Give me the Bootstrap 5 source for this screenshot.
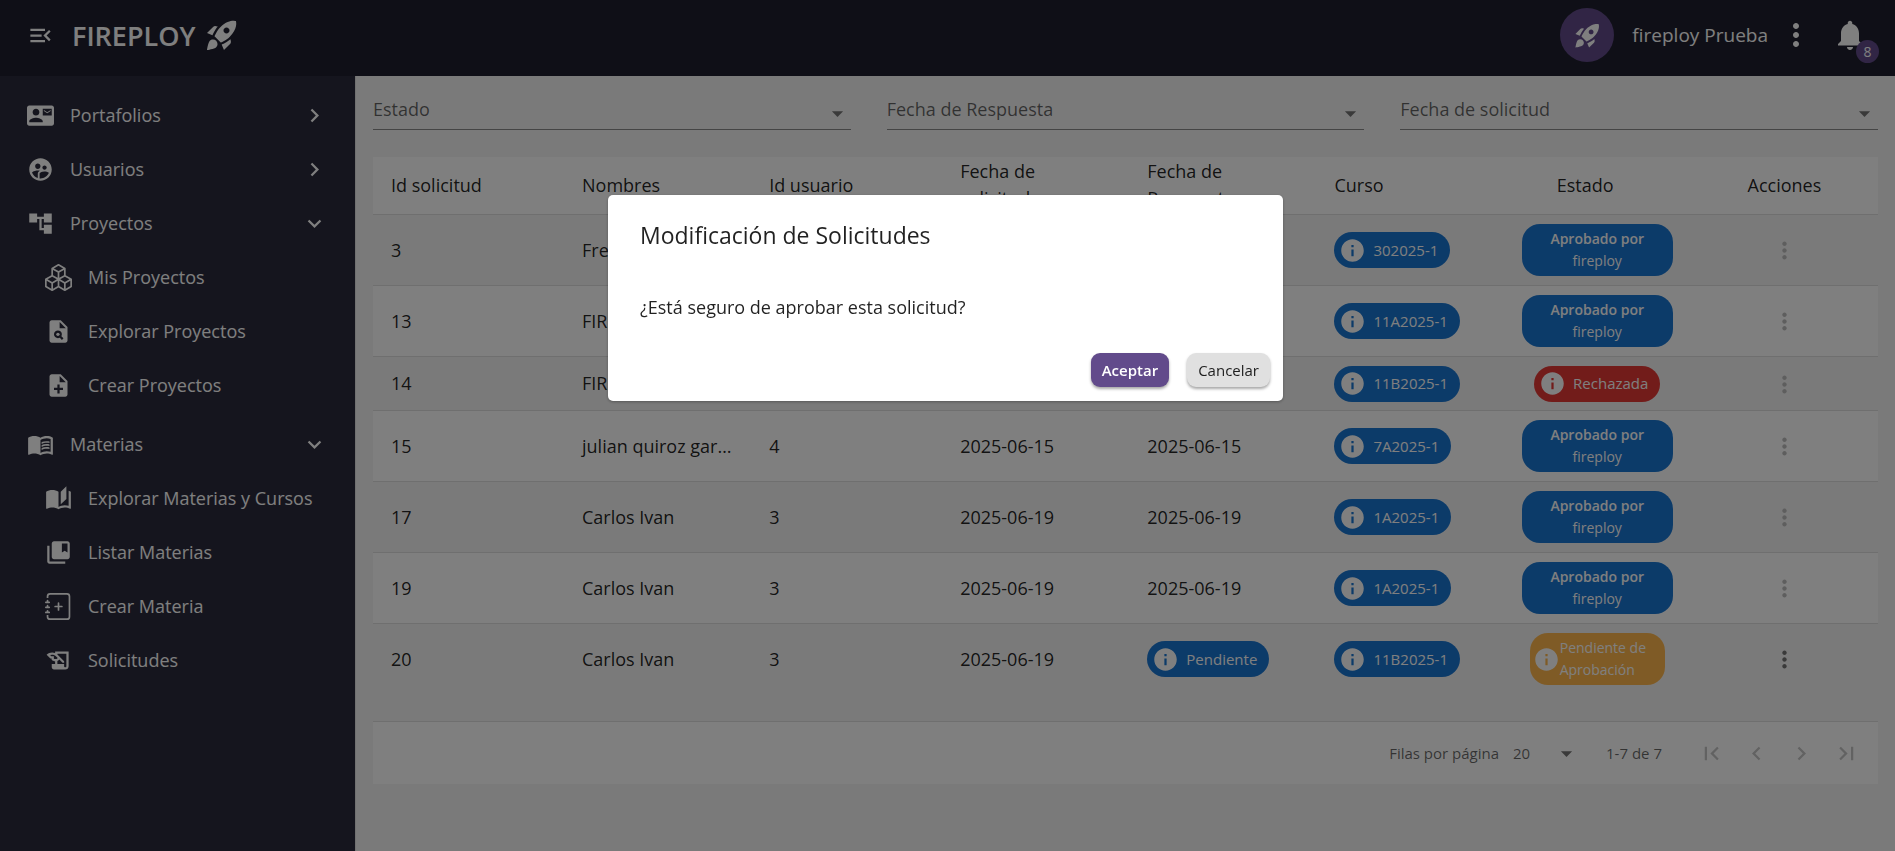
<!DOCTYPE html>
<html lang="es">
<head>
<meta charset="utf-8">
<meta name="viewport" content="width=device-width, initial-scale=1">
<title>Fireploy - Solicitudes</title>
<link rel="stylesheet" href="https://cdn.jsdelivr.net/npm/bootstrap@5.3.0/dist/css/bootstrap.min.css">
<style>
  body { font-family: "Open Sans", "Noto Sans", sans-serif; font-size: 18px; line-height: 27px; color: rgba(0,0,0,.87); background: #f5f5f5; }
  a, a:hover { color: inherit; text-decoration: none; }
  svg { fill: currentColor; flex: none; display: block; }
  .ic { width: 27px; height: 27px; }
  .ic-md { width: 29px; height: 29px; }
  .ic-lg { width: 36px; height: 36px; }
  .plain-btn { background: none; border: 0; padding: 0; color: inherit; }

  .topbar { height: 76px; background: #1f1f2e; color: #fff; padding: 0 27px 6px; }
  .brand { font-size: 27px; font-weight: 600; gap: 9px; }
  .topbar-start, .topbar-end { gap: 18px; }
  .user-name { font-size: 19px; margin-right: -8px; }
  .avatar { width: 54px; height: 54px; background: #624b8b; }
  .count { right: -11px; bottom: -10px; width: 23px; height: 23px; font-size: 14px; line-height: 23px; background: #624b8b; }

  .sidebar { width: 355px; flex: none; background: #2b2b3c; color: #fff; padding: 12px 27px; }
  .sidebar a { display: flex; align-items: center; height: 54px; gap: 16px; }
  .sidebar .sub-links { padding-left: 18px; }
  .sidebar .nav-group + .nav-group { margin-top: 5px; }

  .content { border-left: 1px solid #e0e0e0; padding: 0 17px; min-width: 0; }
  .filters { display: grid; grid-template-columns: repeat(3, 1fr); gap: 36px; padding: 16px 0 27px; }
  .line-select { appearance: none; border: 0; border-bottom: 1px solid #8b8b8b; border-radius: 0; width: 100%; height: 38px; padding: 0 27px 2px 0; color: rgba(0,0,0,.6); background: url("data:image/svg+xml,%3Csvg xmlns='http://www.w3.org/2000/svg' viewBox='0 0 24 24' fill='%23757575'%3E%3Cpath d='M7 10l5 5 5-5z'/%3E%3C/svg%3E") no-repeat right 8px / 27px 27px; }

  .requests { background: #fff; }
  .requests table { width: 100%; table-layout: fixed; border-collapse: separate; border-spacing: 0; }
  .requests .wide { width: 191px; }
  .requests th, .requests td { padding: 0 16px 0 18px; font-weight: 400; border-bottom: 1px solid #dedede; white-space: nowrap; overflow: hidden; text-overflow: ellipsis; }
  .requests th { height: 58px; white-space: normal; }
  .requests .two-line { display: block; height: 56px; }
  .requests td { height: 71px; }
  .requests tr.short td { height: 54px; }
  .requests tr.last-row td { height: 98px; padding-bottom: 27px; }
  .requests tbody tr:nth-child(odd) { background: #f5f5f5; }
  .requests th.sortable { padding-right: 40px; }
  .requests .text-center { padding-left: 16px; }
  .tag { display: inline-flex; align-items: center; vertical-align: middle; gap: 7px; height: 36px; border: 0; border-radius: 18px; padding: 0 12px 0 5px; background: #1976d2; color: #fff; font-size: 15px; }
  .tag-tall { height: 52px; font-size: 14px; line-height: 22px; white-space: normal; }
  .tag-by { width: 151px; padding: 0 24px; justify-content: center; text-align: center; }
  .tag-wait { width: 135px; padding: 0 5px 0 3px; gap: 0; text-align: left; background: #ffb74d; }
  .tag-no { background: #e53935; }
  .tag-by b { font-weight: 600; }
  .dots { color: #757575; vertical-align: middle; }
  .dots:disabled { color: #bdbdbd; }
  .pager { height: 62px; padding-right: 9px; font-size: 15px; color: rgba(0,0,0,.6); }
  .pager select { width: 67px; height: 27px; border: 0; padding: 0 27px 0 0; margin: 0 26px 0 14px; appearance: none; color: inherit; background: url("data:image/svg+xml,%3Csvg xmlns='http://www.w3.org/2000/svg' viewBox='0 0 24 24' fill='%23757575'%3E%3Cpath d='M7 10l5 5 5-5z'/%3E%3C/svg%3E") no-repeat right center / 27px 27px; }
  .pager .range { margin-right: 27px; }
  .pager button { width: 45px; height: 45px; display: grid; place-items: center; color: #c4c4c4; }

  .modal-backdrop.show { opacity: .5; }
  .modal { padding-right: 4px; }
  .modal-dialog { max-width: 675px; margin-top: 195px; }
  .modal-content { border: 0; border-radius: 5px; color: rgba(0,0,0,.87); box-shadow: 0 1px 3px rgba(0,0,0,.3); }
  .confirm-head { padding: 25px 32px 0; }
  .confirm-head h2 { font-size: 23px; line-height: 30px; font-weight: 400; margin: 0; }
  .confirm-text { padding: 44px 32px 0; margin: 0; }
  .confirm-foot { padding: 32px 13px 14px; gap: 18px; }
  .confirm-foot .btn { height: 34px; padding: 0 11px; border: 0; border-radius: 9px; font-size: 15px; line-height: 32px; box-shadow: 0 2px 3px rgba(0,0,0,.35); }
  .btn-accept, .btn-accept:hover { background: #624b8b; color: #fff; font-weight: 600; }
  .btn-cancel, .btn-cancel:hover { background: #e0e0e0; color: rgba(0,0,0,.87); }
</style>
</head>
<body class="modal-open">
<svg class="d-none" aria-hidden="true">
  <symbol id="rocket" viewBox="0 0 24 24"><path d="M9.19 6.35c-2.04 2.29-3.44 5.58-3.57 5.89L2 10.69l4.05-4.05c.47-.47 1.15-.68 1.81-.55l1.33.26zM11.17 17s3.74-1.55 5.89-3.7c5.4-5.4 4.5-9.62 4.21-10.57-.95-.3-5.17-1.19-10.57 4.21C8.55 9.09 7 12.83 7 12.83L11.17 17zm6.48-2.19c-2.29 2.04-5.58 3.44-5.89 3.57L13.31 22l4.05-4.05c.47-.47.68-1.15.55-1.81l-.26-1.33zM9 18c0 .83-.34 1.58-.88 2.12C6.94 21.3 2 22 2 22s.7-4.94 1.88-6.12C4.42 15.34 5.17 15 6 15c1.66 0 3 1.34 3 3zm4-9c0-1.1.9-2 2-2s2 .9 2 2-.9 2-2 2-2-.9-2-2z"/></symbol>
  <symbol id="more" viewBox="0 0 24 24"><path d="M12 8c1.1 0 2-.9 2-2s-.9-2-2-2-2 .9-2 2 .9 2 2 2zm0 2c-1.1 0-2 .9-2 2s.9 2 2 2 2-.9 2-2-.9-2-2-2zm0 6c-1.1 0-2 .9-2 2s.9 2 2 2 2-.9 2-2-.9-2-2-2z"/></symbol>
  <symbol id="info" viewBox="0 0 24 24"><path d="M12 2C6.48 2 2 6.48 2 12s4.48 10 10 10 10-4.48 10-10S17.52 2 12 2zm1 15h-2v-6h2v6zm0-8h-2V7h2v2z"/></symbol>
  <symbol id="right" viewBox="0 0 24 24"><path d="M10 6 8.59 7.41 13.17 12l-4.58 4.59L10 18l6-6z"/></symbol>
  <symbol id="left" viewBox="0 0 24 24"><path d="M15.41 7.41 14 6l-6 6 6 6 1.41-1.41L10.83 12z"/></symbol>
  <symbol id="down" viewBox="0 0 24 24"><path d="M16.59 8.59 12 13.17 7.41 8.59 6 10l6 6 6-6z"/></symbol>
</svg>

<div class="d-flex flex-column min-vh-100">
  <header class="topbar d-flex align-items-center justify-content-between">
    <div class="topbar-start d-flex align-items-center">
      <button class="plain-btn" aria-label="Contraer menú"><svg class="ic" viewBox="0 0 24 24"><path d="M3 18h13v-2H3v2zm0-5h10v-2H3v2zm0-7v2h13V6H3zm18 9.59L17.42 12 21 8.41 19.59 7l-5 5 5 5L21 15.59z"/></svg></button>
      <a href="#" class="brand d-flex align-items-center">FIREPLOY <svg class="ic-lg"><use href="#rocket"/></svg></a>
    </div>
    <div class="topbar-end d-flex align-items-center">
      <div class="avatar rounded-circle d-flex align-items-center justify-content-center"><svg class="ic-md"><use href="#rocket"/></svg></div>
      <span class="user-name">fireploy Prueba</span>
      <button class="plain-btn" aria-label="Cuenta"><svg class="ic-lg"><use href="#more"/></svg></button>
      <button class="plain-btn position-relative" aria-label="Notificaciones"><svg class="ic-lg" viewBox="0 0 24 24"><path d="M12 22c1.1 0 2-.9 2-2h-4c0 1.1.89 2 2 2zm6-6v-5c0-3.07-1.64-5.64-4.5-6.32V4c0-.83-.67-1.5-1.5-1.5s-1.5.67-1.5 1.5v.68C7.63 5.36 6 7.92 6 11v5l-2 2v1h16v-1l-2-2z"/></svg><span class="count position-absolute rounded-circle">8</span></button>
    </div>
  </header>

  <div class="d-flex flex-grow-1">
    <nav class="sidebar" aria-label="Principal">
      <a href="#"><svg class="ic" viewBox="0 0 24 24"><path d="M21 8V7l-3 2-3-2v1l3 2 3-2zm1-5H2C.9 3 0 3.9 0 5v14c0 1.1.9 2 2 2h20c1.1 0 1.99-.9 1.99-2L24 5c0-1.1-.9-2-2-2zM8 6c1.66 0 3 1.34 3 3s-1.34 3-3 3-3-1.34-3-3 1.34-3 3-3zm6 12H2v-1c0-2 4-3.1 6-3.1s6 1.1 6 3.1v1zm8-6h-8V6h8v6z"/></svg><span class="flex-grow-1">Portafolios</span><svg class="ic"><use href="#right"/></svg></a>
      <a href="#"><svg class="ic" viewBox="0 0 24 24"><path d="M11.99 2c-5.52 0-10 4.48-10 10s4.48 10 10 10 10-4.48 10-10-4.48-10-10-10zm3.61 6.34c1.07 0 1.93.86 1.93 1.93 0 1.07-.86 1.93-1.93 1.93-1.07 0-1.93-.86-1.93-1.93-.01-1.07.86-1.93 1.93-1.93zm-6-1.58c1.3 0 2.36 1.06 2.36 2.36 0 1.3-1.06 2.36-2.36 2.36s-2.36-1.06-2.36-2.36c0-1.31 1.05-2.36 2.36-2.36zm0 9.13v3.75c-2.4-.75-4.3-2.6-5.14-4.96 1.05-1.12 3.67-1.69 5.14-1.69.53 0 1.2.08 1.9.22-1.64.87-1.9 2.02-1.9 2.68zM11.99 20c-.27 0-.53-.01-.79-.04v-4.07c0-1.42 2.94-2.13 4.4-2.13 1.07 0 2.92.39 3.84 1.15-1.17 2.97-4.06 5.09-7.45 5.09z"/></svg><span class="flex-grow-1">Usuarios</span><svg class="ic"><use href="#right"/></svg></a>
      <div class="nav-group">
        <a href="#"><svg class="ic" viewBox="0 0 24 24"><path d="M22 11V3h-7v3H9V3H2v8h7V8h2v10h4v3h7v-8h-7v3h-2V8h2v3z"/></svg><span class="flex-grow-1">Proyectos</span><svg class="ic"><use href="#down"/></svg></a>
        <div class="sub-links">
          <a href="#"><svg class="ic" viewBox="0 0 16 16"><path d="M7.752.066a.5.5 0 0 1 .496 0l3.75 2.143a.5.5 0 0 1 .252.434v3.995l3.498 2A.5.5 0 0 1 16 9.07v4.286a.5.5 0 0 1-.252.434l-3.75 2.143a.5.5 0 0 1-.496 0l-3.502-2-3.502 2.001a.5.5 0 0 1-.496 0l-3.75-2.143A.5.5 0 0 1 0 13.357V9.071a.5.5 0 0 1 .252-.434L3.75 6.638V2.643a.5.5 0 0 1 .252-.434L7.752.066ZM4.25 7.504 1.508 9.071l2.742 1.567 2.742-1.567L4.25 7.504ZM7.5 9.933l-2.75 1.571v3.134l2.75-1.571V9.933Zm1 3.134 2.75 1.571v-3.134L8.5 9.933v3.134Zm.508-3.996 2.742 1.567 2.742-1.567-2.742-1.567-2.742 1.567Zm2.242-2.433V3.504L8.5 5.076V8.21l2.75-1.572ZM7.5 8.21V5.076L4.75 3.504v3.134L7.5 8.21ZM5.258 2.643 8 4.21l2.742-1.567L8 1.076 5.258 2.643ZM15 9.933l-2.75 1.571v3.134L15 13.067V9.933ZM3.75 14.638v-3.134L1 9.933v3.134l2.75 1.571Z"/></svg>Mis Proyectos</a>
          <a href="#"><svg class="ic" viewBox="0 0 24 24"><path fill-rule="evenodd" d="M14 2H6c-1.1 0-2 .9-2 2v16c0 1.1.89 2 1.99 2H18c1.1 0 2-.9 2-2V8l-6-6zm1.04 17.45-1.88-1.88c-1.33.71-3.01.53-4.13-.59-1.37-1.37-1.37-3.58 0-4.95 1.37-1.37 3.58-1.37 4.95 0 1.12 1.12 1.3 2.8.59 4.13l1.88 1.88-1.41 1.41zM13 9V3.5L18.5 9H13z"/><circle cx="11.5" cy="14.5" r="1.5"/></svg>Explorar Proyectos</a>
          <a href="#"><svg class="ic" viewBox="0 0 24 24"><path d="M14 2H6c-1.1 0-1.99.9-1.99 2L4 20c0 1.1.89 2 1.99 2H18c1.1 0 2-.9 2-2V8l-6-6zm2 14h-3v3h-2v-3H8v-2h3v-3h2v3h3v2zm-3-7V3.5L18.5 9H13z"/></svg>Crear Proyectos</a>
        </div>
      </div>
      <div class="nav-group">
        <a href="#"><svg class="ic" viewBox="0 0 24 24"><path d="M17.5 4.5c-1.95 0-4.05.4-5.5 1.5-1.45-1.1-3.55-1.5-5.5-1.5S2.45 4.9 1 6v14.65c0 .65.73.45.75.45C3.1 20.45 5.05 20 6.5 20c1.95 0 4.05.4 5.5 1.5 1.35-.85 3.8-1.5 5.5-1.5 1.65 0 3.35.3 4.75 1.05.41.21.75-.19.75-.45V6c-1.49-1.12-3.63-1.5-5.5-1.5zm3.5 14c-1.1-.35-2.3-.5-3.5-.5-1.7 0-4.15.65-5.5 1.5V8c1.35-.85 3.8-1.5 5.5-1.5 1.2 0 2.4.15 3.5.5v11.5z"/><path d="M17.5 10.5c.88 0 1.73.09 2.5.26V9.24c-.79-.15-1.64-.24-2.5-.24-1.7 0-3.24.29-4.5.83v1.66c1.13-.64 2.7-.99 4.5-.99zM13 12.49v1.66c1.13-.64 2.7-.99 4.5-.99.88 0 1.73.09 2.5.26V11.9c-.79-.15-1.64-.24-2.5-.24-1.7 0-3.24.3-4.5.83zM17.5 14.33c-1.7 0-3.24.29-4.5.83v1.66c1.13-.64 2.7-.99 4.5-.99.88 0 1.73.09 2.5.26v-1.52c-.79-.16-1.64-.24-2.5-.24z"/></svg><span class="flex-grow-1">Materias</span><svg class="ic"><use href="#down"/></svg></a>
        <div class="sub-links">
          <a href="#"><svg class="ic" viewBox="0 0 24 24"><path d="M19 1l-5 5v11l5-4.5V1zM1 6v14.65c0 .25.25.5.5.5.1 0 .15-.05.25-.05C3.1 20.45 5.05 20 6.5 20c1.95 0 4.05.4 5.5 1.5V6c-1.45-1.1-3.55-1.5-5.5-1.5S2.45 4.9 1 6zm22 13.5V6c-.6-.45-1.25-.75-2-1v13.5c-1.1-.35-2.3-.5-3.5-.5-1.7 0-4.15.65-5.5 1.5v2c1.35-.85 3.8-1.5 5.5-1.5 1.65 0 3.35.3 4.75 1.05.1.05.15.05.25.05.25 0 .5-.25.5-.5v-1.1z"/></svg>Explorar Materias y Cursos</a>
          <a href="#"><svg class="ic" viewBox="0 0 24 24"><path d="M4 6H2v14c0 1.1.9 2 2 2h14v-2H4V6z"/><path d="M20 2H8c-1.1 0-2 .9-2 2v12c0 1.1.9 2 2 2h12c1.1 0 2-.9 2-2V4c0-1.1-.9-2-2-2zm0 10l-2.5-1.5L15 12V4h5v8z"/></svg>Listar Materias</a>
          <a href="#"><svg class="ic" viewBox="0 0 16 16"><path d="M8 5.5a.5.5 0 0 1 .5.5v1.5H10a.5.5 0 0 1 0 1H8.5V10a.5.5 0 0 1-1 0V8.5H6a.5.5 0 0 1 0-1h1.5V6a.5.5 0 0 1 .5-.5z"/><path d="M3 0h10a2 2 0 0 1 2 2v12a2 2 0 0 1-2 2H3a2 2 0 0 1-2-2v-1h1v1a1 1 0 0 0 1 1h10a1 1 0 0 0 1-1V2a1 1 0 0 0-1-1H3a1 1 0 0 0-1 1v1H1V2a2 2 0 0 1 2-2z"/><path d="M1 5v-.5a.5.5 0 0 1 1 0V5h.5a.5.5 0 0 1 0 1h-2a.5.5 0 0 1 0-1H1zm0 3v-.5a.5.5 0 0 1 1 0V8h.5a.5.5 0 0 1 0 1h-2a.5.5 0 0 1 0-1H1zm0 3v-.5a.5.5 0 0 1 1 0v.5h.5a.5.5 0 0 1 0 1h-2a.5.5 0 0 1 0-1H1z"/></svg>Crear Materia</a>
          <a href="#"><svg class="ic" viewBox="0 0 24 24"><path d="M9 4v1.38c-.83-.33-1.72-.5-2.61-.5-1.79 0-3.58.68-4.95 2.05l3.33 3.33h1.11v1.11c.86.86 1.98 1.31 3.11 1.36V15H6v3c0 1.1.9 2 2 2h10c1.66 0 3-1.34 3-3V4H9zm-1.11 6.41V8.26H5.61L4.57 7.22a5.07 5.07 0 0 1 1.82-.34c1.34 0 2.59.52 3.54 1.46l1.41 1.41-.2.2c-.51.51-1.19.8-1.92.8-.47 0-.93-.12-1.33-.34zM19 17c0 .55-.45 1-1 1s-1-.45-1-1v-2h-6v-2.59c.57-.23 1.1-.57 1.56-1.03l.2-.2L15.59 14H17v-1.41l-6-5.97V6h8v11z"/></svg>Solicitudes</a>
        </div>
      </div>
    </nav>

    <main class="content flex-grow-1">
      <div class="filters">
        <select class="line-select" aria-label="Estado"><option>Estado</option></select>
        <select class="line-select" aria-label="Fecha de Respuesta"><option>Fecha de Respuesta</option></select>
        <select class="line-select" aria-label="Fecha de solicitud"><option>Fecha de solicitud</option></select>
      </div>
      <section class="requests">
        <table>
          <colgroup><col class="wide"><col><col class="wide"><col><col><col><col><col></colgroup>
          <thead>
            <tr><th>Id solicitud</th><th>Nombres</th><th>Id usuario</th><th class="sortable"><span class="two-line">Fecha de solicitud</span></th><th class="sortable"><span class="two-line">Fecha de Respuesta</span></th><th>Curso</th><th class="sortable text-center">Estado</th><th class="text-center">Acciones</th></tr>
          </thead>
          <tbody>
            <tr><td>3</td><td>Fredy</td><td>2</td><td>2025-06-14</td><td>2025-06-14</td><td><button class="tag"><svg class="ic"><use href="#info"/></svg>302025-1</button></td><td class="text-center"><span class="tag tag-tall tag-by"><span><b>Aprobado por</b> fireploy</span></span></td><td class="text-center"><button class="plain-btn dots" disabled aria-label="Acciones"><svg class="ic"><use href="#more"/></svg></button></td></tr>
            <tr><td>13</td><td>FIREPLOY</td><td>1</td><td>2025-06-15</td><td>2025-06-15</td><td><button class="tag"><svg class="ic"><use href="#info"/></svg>11A2025-1</button></td><td class="text-center"><span class="tag tag-tall tag-by"><span><b>Aprobado por</b> fireploy</span></span></td><td class="text-center"><button class="plain-btn dots" disabled aria-label="Acciones"><svg class="ic"><use href="#more"/></svg></button></td></tr>
            <tr class="short"><td>14</td><td>FIREPLOY</td><td>1</td><td>2025-06-15</td><td>2025-06-15</td><td><button class="tag"><svg class="ic"><use href="#info"/></svg>11B2025-1</button></td><td class="text-center"><span class="tag tag-no"><svg class="ic"><use href="#info"/></svg>Rechazada</span></td><td class="text-center"><button class="plain-btn dots" disabled aria-label="Acciones"><svg class="ic"><use href="#more"/></svg></button></td></tr>
            <tr><td>15</td><td>julian quiroz garcia</td><td>4</td><td>2025-06-15</td><td>2025-06-15</td><td><button class="tag"><svg class="ic"><use href="#info"/></svg>7A2025-1</button></td><td class="text-center"><span class="tag tag-tall tag-by"><span><b>Aprobado por</b> fireploy</span></span></td><td class="text-center"><button class="plain-btn dots" disabled aria-label="Acciones"><svg class="ic"><use href="#more"/></svg></button></td></tr>
            <tr><td>17</td><td>Carlos Ivan</td><td>3</td><td>2025-06-19</td><td>2025-06-19</td><td><button class="tag"><svg class="ic"><use href="#info"/></svg>1A2025-1</button></td><td class="text-center"><span class="tag tag-tall tag-by"><span><b>Aprobado por</b> fireploy</span></span></td><td class="text-center"><button class="plain-btn dots" disabled aria-label="Acciones"><svg class="ic"><use href="#more"/></svg></button></td></tr>
            <tr><td>19</td><td>Carlos Ivan</td><td>3</td><td>2025-06-19</td><td>2025-06-19</td><td><button class="tag"><svg class="ic"><use href="#info"/></svg>1A2025-1</button></td><td class="text-center"><span class="tag tag-tall tag-by"><span><b>Aprobado por</b> fireploy</span></span></td><td class="text-center"><button class="plain-btn dots" disabled aria-label="Acciones"><svg class="ic"><use href="#more"/></svg></button></td></tr>
            <tr class="last-row"><td>20</td><td>Carlos Ivan</td><td>3</td><td>2025-06-19</td><td><span class="tag"><svg class="ic"><use href="#info"/></svg>Pendiente</span></td><td><button class="tag"><svg class="ic"><use href="#info"/></svg>11B2025-1</button></td><td class="text-center"><span class="tag tag-tall tag-wait"><svg class="ic"><use href="#info"/></svg><span>Pendiente de Aprobación</span></span></td><td class="text-center"><button class="plain-btn dots" aria-label="Acciones"><svg class="ic"><use href="#more"/></svg></button></td></tr>
          </tbody>
        </table>
        <div class="pager d-flex align-items-center justify-content-end">
          <label for="page-size">Filas por página</label>
          <select id="page-size"><option>20</option></select>
          <span class="range">1-7 de 7</span>
          <button class="plain-btn" disabled aria-label="Primera página"><svg class="ic" viewBox="0 0 24 24"><path d="M18.41 16.59 13.82 12l4.59-4.59L17 6l-6 6 6 6zM6 6h2v12H6z"/></svg></button>
          <button class="plain-btn" disabled aria-label="Página anterior"><svg class="ic"><use href="#left"/></svg></button>
          <button class="plain-btn" disabled aria-label="Página siguiente"><svg class="ic"><use href="#right"/></svg></button>
          <button class="plain-btn" disabled aria-label="Última página"><svg class="ic" viewBox="0 0 24 24"><path d="M5.59 7.41 10.18 12l-4.59 4.59L7 18l6-6-6-6zM16 6h2v12h-2z"/></svg></button>
        </div>
      </section>
    </main>
  </div>
</div>

<div class="modal-backdrop show"></div>
<div class="modal show d-block" role="dialog" aria-modal="true" aria-labelledby="confirm-title">
  <div class="modal-dialog">
    <div class="modal-content">
      <div class="confirm-head"><h2 id="confirm-title">Modificación de Solicitudes</h2></div>
      <p class="confirm-text">¿Está seguro de aprobar esta solicitud?</p>
      <div class="confirm-foot d-flex justify-content-end">
        <button class="btn btn-accept">Aceptar</button>
        <button class="btn btn-cancel">Cancelar</button>
      </div>
    </div>
  </div>
</div>
<script src="https://cdn.jsdelivr.net/npm/bootstrap@5.3.0/dist/js/bootstrap.bundle.min.js"></script>
</body>
</html>
